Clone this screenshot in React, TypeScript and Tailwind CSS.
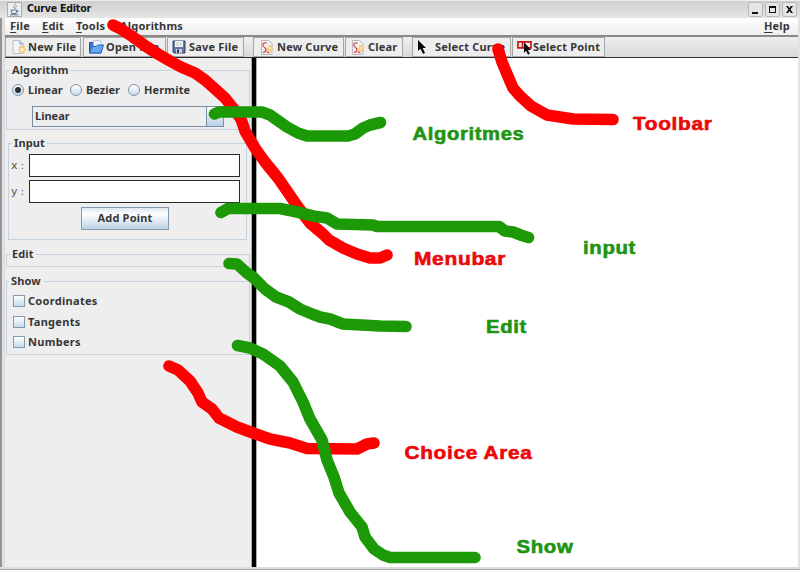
import React from "react";

const redLines = [
  "M113 25L121 29L133 37L147 47L158 54L170 61L181 67L195 73L205 80L214 88L225 98L233 108L241 119L245 131L255 148L265 162L278 178L287 191L298 207L310 223L323 234L329 240L343 248L357 254L370 258L380 258L387 255",
  "M498 49L502 62L507 74L513 88L520 96L531 106L547 115L573 119L613 119.5",
  "M169 366L178 370L190 381L198 393L202 402L212 409L219 418L237 427L253 433L270 439L290 443L307 448.5L357 449L367 444L374 443",
];
const greenLines = [
  "M214.5 114L219 112L262 112L270 115L287 127L298 133L307 136L348 136L355 134L363 128L370 125L380.5 122.5",
  "M221 212.5L228 208.5L280 208.5L297 212L313 216L327 218L337 224L373 225L377 226.5L499 226.5L505 231L513 232L522 235.5L528.5 237.5",
  "M229 263.5L237 264L247 273L254 278L265 289L276 297L289 302L300 309L312 314L320 317L330 319L343 324L380 326L406 326.5",
  "M237.5 345.5L250 348L263 354L280 366L293 382L303 402L310 419L322 440L327 460L334 477L339 493L350 512L362 527L365 537L374 549L383 555L390 557.5L475 557.5",
];
const labels: [string, number, number, number, string][] = [
  ["Toolbar", 633, 130, 79.5, "#ec0808"],
  ["Algoritmes", 412.5, 140, 112, "#209412"],
  ["Menubar", 414, 265, 92, "#ec0808"],
  ["input", 583, 254, 53, "#209412"],
  ["Edit", 486, 333, 41, "#209412"],
  ["Choice Area", 404.5, 459, 128, "#ec0808"],
  ["Show", 516.5, 553, 57, "#209412"],
];

function Annotations() {
  return (
    <svg className="pointer-events-none absolute inset-0" width="800" height="570" viewBox="0 0 800 570">
      <g fill="none" strokeWidth="11.6" strokeLinecap="round" strokeLinejoin="round">
        {redLines.map((d) => <path key={d} d={d} stroke="#fe0000" />)}
        {greenLines.map((d) => <path key={d} d={d} stroke="#1c9906" />)}
      </g>
      <g className="font-['Liberation_Sans',Arial,sans-serif] text-[18.5px] font-bold tracking-[0.6px]" strokeWidth="0.6">
        {labels.map(([t, x, y, w, c]) => (
          <text key={t} x={x} y={y} textLength={w} lengthAdjust="spacingAndGlyphs" fill={c} stroke={c}>{t}</text>
        ))}
      </g>
    </svg>
  );
}

function JavaIcon() {
  return (
    <svg width="15" height="15" viewBox="0 0 15 15" fill="none">
      <rect x="0.5" y="0.5" width="14" height="14" fill="#e9eef2" stroke="#a5adb5" />
      <path d="M8.5 1.5C9 3.5 5.5 3.5 7 6.5M10 4C8 5 8 5.5 8.5 7" stroke="#d78350" />
      <path d="M4 8h6l-1 3.5H5zM10 8.5q2.5 0 0 2M3 12.8h8.5" stroke="#58758b" />
    </svg>
  );
}
function NewFileIcon() {
  return (
    <svg width="16" height="16" viewBox="0 0 16 16">
      <path d="M2 1.5h7l3 3v10H2z" fill="#f2f5fb" stroke="#b9c0ce" />
      <path d="M8.500 1.500l.5 3.500h3.500" fill="#bccbe6" stroke="#9fa9bf" />
      <path d="M10 5l1.200 2.500L14 6.800l-.8 2.500L16 11l-2.800.8.3 3-2.500-1.800L8.500 15l.3-3L6 11l2.500-1.200L7.800 7l2.200.6z" fill="#f4c262" />
      <circle cx="11" cy="10.500" r="2" fill="#fdf0bd" />
    </svg>
  );
}
function OpenIcon() {
  return (
    <svg width="16" height="16" viewBox="0 0 16 16">
      <path d="M1.500 14V3.500h4L7 5h6v9z" fill="#3f78cf" stroke="#2556a4" />
      <path d="M5 2l7-1 2 6-8 2z" fill="#eef4fc" stroke="#94acd2" strokeWidth=".7" />
      <path d="M1.500 14L4 7.500h4L9.500 6H15.500L13 14z" fill="#65a8f1" stroke="#2b64bd" />
    </svg>
  );
}
function SaveIcon() {
  return (
    <svg width="14" height="14" viewBox="0 0 14 14">
      <path d="M1 1h12v12H2l-1-1z" fill="#6876a6" stroke="#343e67" />
      <rect x="3" y="1" width="8" height="6" fill="#f1f3f7" />
      <path d="M4 3h6M4 5h6" stroke="#c2c7d2" />
      <rect x="4" y="9" width="6" height="4" fill="#cbd2df" />
      <rect x="5" y="9.500" width="2" height="3.500" fill="#303a60" />
    </svg>
  );
}
function CurveIcon() {
  return (
    <svg width="14" height="15" viewBox="0 0 14 15">
      <path d="M1.500 .5h7l3.500 3v11H1.500z" fill="#f1f1f3" stroke="#b9b9bc" />
      <path d="M6.500 3C2 2.500 2 6 4.500 7.500S6 12 3 12.500M6.500 11.500l3 1.500" fill="none" stroke="#d7424c" strokeWidth="1.300" />
      <path d="M9 4l1.100 2.100 2.400-.6-.7 2.200L14 9l-2.300.7.2 2.300-2.200-1.300L7.700 12l.2-2.500L6 8l2.200-.6z" fill="#f3c46b" />
      <circle cx="10" cy="8.300" r="1.500" fill="#fdeab0" />
    </svg>
  );
}
function Pointer() {
  return (
    <svg width="9" height="14" viewBox="0 0 9 14"><path d="M1 0v11l2.500-2.300L6 14l2-1-2.300-5H9z" fill="#080808" /></svg>
  );
}
function SelectPointIcon() {
  return (
    <svg width="15" height="15" viewBox="0 0 15 15">
      <path d="M1 1.800h13v6H1zM5.500 1.800v6" fill="none" stroke="#cb1518" strokeWidth="1.700" />
      <path d="M7 2v11l2.200-2.200 1.800 4 1.800-1-1.800-3.800H14z" fill="#0c0c0c" />
    </svg>
  );
}

type BtnProps = { className: string; icon: React.ReactNode; children: React.ReactNode };
function ToolButton({ className, icon, children }: BtnProps) {
  return (
    <button className={`flex h-[20px] shrink-0 items-center border border-[#a6a6a6] bg-[#eeeeee] tracking-[0.2px] ${className}`}>
      {icon}
      {children}
    </button>
  );
}

function Group({ title, className, legend, children }: { title: string; className: string; legend: string; children?: React.ReactNode }) {
  return (
    <fieldset className={`min-w-0 border border-[#c5d3e0] ${className}`}>
      <legend className={`h-[14px] px-[2px] leading-[14px] tracking-[0.1px] ${legend}`}>{title}</legend>
      {children}
    </fieldset>
  );
}

function Radio({ label, checked, className }: { label: string; checked?: boolean; className: string }) {
  return (
    <label className={`flex shrink-0 items-center gap-[4px] ${className}`}>
      <span className="flex size-[12px] shrink-0 items-center justify-center rounded-full border border-[#7f91a3] bg-linear-to-b from-white to-[#cadceb]">
        {checked && <span className="size-[6px] rounded-full bg-[#293139]" />}
      </span>
      {label}
    </label>
  );
}

function Check({ label }: { label: string }) {
  return (
    <label className="flex h-[20.5px] items-center gap-[3px] tracking-[0.3px]">
      <span className="size-[12px] shrink-0 border border-[#8499ad] bg-linear-to-b from-white to-[#c5d9ea]" />
      {label}
    </label>
  );
}

function Menu({ label, className }: { label: string; className: string }) {
  return <span className={`shrink-0 tracking-[0.2px] ${className}`}><span className="underline decoration-1 underline-offset-2">{label[0]}</span>{label.slice(1)}</span>;
}

export default function App() {
  return (
    <div className="relative flex h-[570px] w-[800px] flex-col overflow-hidden bg-[#e3e3e3] font-['Noto_Sans','DejaVu_Sans',sans-serif] text-[11px] font-bold whitespace-nowrap text-[#363636]">
      <header className="flex h-[18px] shrink-0 items-center border-t border-[#eeeeee] bg-linear-to-b from-[#cfcfcf] to-[#e5e5e5] pr-[3px] pl-[7px]">
        <JavaIcon />
        <span className="ml-[5px] pb-px font-['DejaVu_Sans_Condensed','DejaVu_Sans',sans-serif] text-[10.5px] tracking-[-0.2px] text-[#171717]">Curve Editor</span>
        <div className="ml-auto flex gap-[2px]">
          {["M4 10h6v2H4z", "M4 4h7v7H4zM5 6v4h5V6z", "M4 4h2l1.500 2L9 4h2L8.500 7.500 11 11H9L7.500 9 6 11H4l2.500-3.500z"].map((d) => (
            <svg key={d} width="15" height="15" viewBox="0 0 15 15">
              <rect x=".5" y=".5" width="14" height="14" rx="2" fill="#e5e5e5" stroke="#b8b8b8" />
              <path d={d} fill="#101010" fillRule="evenodd" />
            </svg>
          ))}
        </div>
      </header>

      <div className="flex min-h-0 flex-1 border-l-2 border-[#949494] pr-[2px] pl-[2px]">
        <div className="flex min-w-0 flex-1 flex-col border-l border-[#dcd9dc]">
          <nav className="flex h-[17px] shrink-0 items-center bg-linear-to-b from-white to-[#eeeeee] pr-[8px] pl-[5px]">
            <Menu label="File" className="w-[32px]" />
            <Menu label="Edit" className="w-[34px]" />
            <Menu label="Tools" className="w-[44px]" />
            <Menu label="Algorithms" className="" />
            <Menu label="Help" className="ml-auto" />
          </nav>
          <div className="flex h-[23px] shrink-0 items-center border-t-2 border-b border-t-[#898989] border-b-[#2d2d2d] bg-linear-to-b from-[#eeeeee] to-[#dadada]">
            <ToolButton className="w-[76px] gap-[1px] pl-[5px]" icon={<NewFileIcon />}>New File</ToolButton>
            <ToolButton className="ml-[2px] w-[83px] gap-[2px] pl-[4px]" icon={<OpenIcon />}>Open File</ToolButton>
            <ToolButton className="ml-[1px] w-[77px] gap-[3px] pl-[4px]" icon={<SaveIcon />}>Save File</ToolButton>
            <ToolButton className="ml-[9px] w-[91px] gap-[3px] pl-[6px]" icon={<CurveIcon />}>New Curve</ToolButton>
            <ToolButton className="ml-[1px] w-[58px] gap-[3px] pl-[5px]" icon={<CurveIcon />}>Clear</ToolButton>
            <ToolButton className="ml-[9px] w-[99px] gap-[9px] pl-[4px]" icon={<Pointer />}>Select Curve</ToolButton>
            <ToolButton className="ml-[1px] w-[93px] gap-[1px] pl-[4px]" icon={<SelectPointIcon />}>Select Point</ToolButton>
          </div>
          <main className="flex min-h-0 flex-1">
            <aside className="flex w-[246px] shrink-0 flex-col bg-[#eeeeee] pt-[5px] pl-[1px]">
              <Group title="Algorithm" className="h-[67px] w-[244px]" legend="ml-[3px]">
                <div className="flex h-[26px] items-center pl-[5px]">
                  <Radio label="Linear" checked className="w-[58px]" />
                  <Radio label="Bezier" className="w-[58px]" />
                  <Radio label="Hermite" className="tracking-[0.15px]" />
                </div>
                <div className="mt-[3px] ml-[25px] flex h-[21px] w-[192px] items-center border border-[#7b90a5] pl-[2px]">
                  <span>Linear</span>
                  <span className="ml-auto h-full w-[17px] border-l border-[#7b90a5] bg-linear-to-b from-white to-[#b8cfe5]" />
                </div>
              </Group>
              <Group title="Input" className="mt-[6px] ml-[2px] h-[104px] w-[239px]" legend="ml-[3px]">
                {["x :", "y :"].map((t) => (
                  <label key={t} className="mb-[3px] flex h-[23px] items-center first-of-type:mt-[4px]">
                    <span className="w-[20px] pt-px pl-[2px] font-['DejaVu_Sans'] text-[11px] font-normal tracking-[-0.3px] text-[#555]">{t}</span>
                    <span className="h-[23px] w-[211px] border border-[#292929] bg-white" />
                  </label>
                ))}
                <button className="mt-[4px] ml-[72px] flex h-[23px] w-[88px] items-center justify-center border border-[#8499ad] bg-linear-to-b from-[#dce7f1] via-white via-30% to-[#bdd1e3] tracking-[0.2px]">Add Point</button>
              </Group>
              <Group title="Edit" className="mt-[7px] h-[20px] w-[244px]" legend="ml-[3px]" />
              <Group title="Show" className="mt-[7px] h-[81px] w-[244px]" legend="ml-[2px]">
                <div className="flex flex-col pt-[3px] pl-[6px]">
                  <Check label="Coordinates" />
                  <Check label="Tangents" />
                  <Check label="Numbers" />
                </div>
              </Group>
            </aside>
            <div className="w-[6px] shrink-0 border-x border-x-[#aaaaaa] bg-black" />
            <div className="flex-1 bg-white" />
          </main>
        </div>
      </div>
      <footer className="h-[3px] shrink-0 border-b border-[#aaaaaa] bg-[#dddddd]" />
      <Annotations />
    </div>
  );
}
